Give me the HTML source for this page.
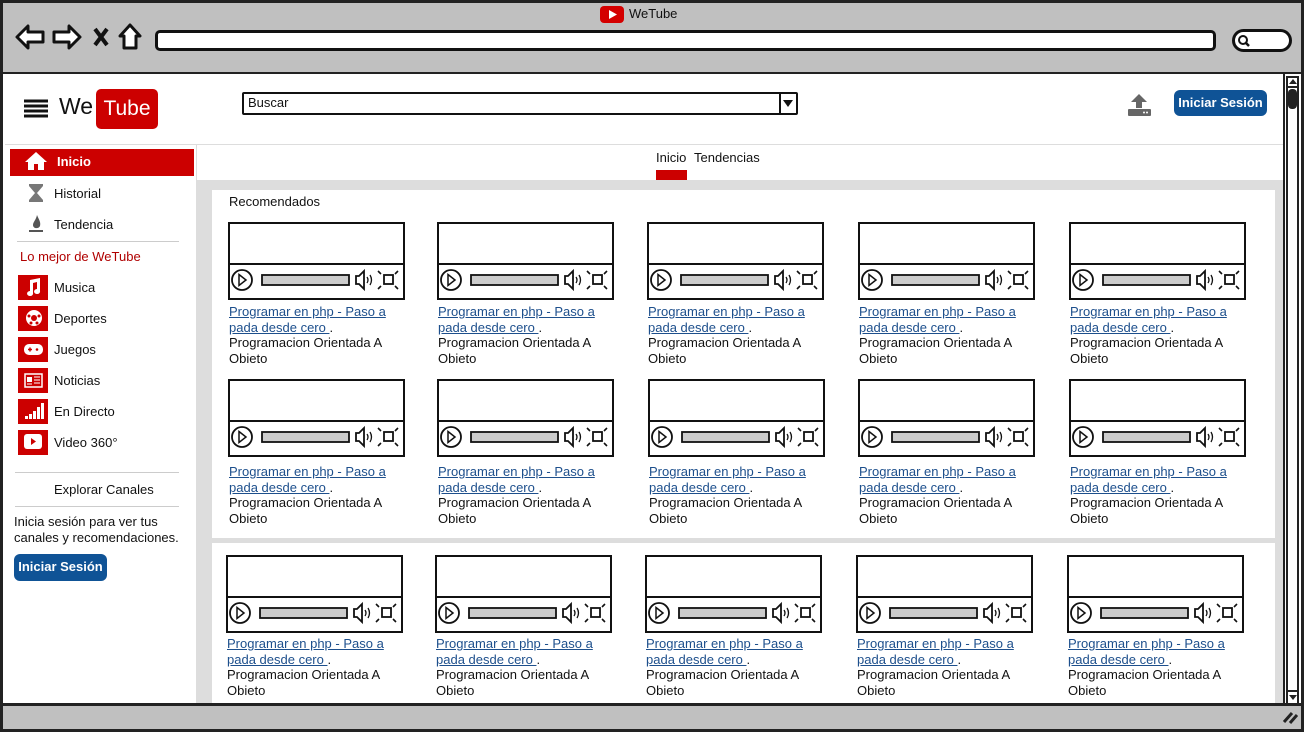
<!DOCTYPE html>
<html><head><meta charset="utf-8">
<style>
*{margin:0;padding:0;box-sizing:border-box}
body{width:1304px;height:732px;overflow:hidden;background:#fff;font-family:"Liberation Sans",sans-serif;color:#111;position:relative}
.a{position:absolute}
.t{font-size:13px;white-space:nowrap}
.card{position:absolute;width:180px}
.card svg{display:block}
.card .tx{position:absolute;left:1px;top:82px;font-size:13px;line-height:15.7px;white-space:nowrap}
.card a{color:#1d4f8c;text-decoration:underline}
.side{position:absolute;left:54px;font-size:13px}
.ic{position:absolute;left:18px;width:30px;height:25px;background:#cc0000}
.btn{position:absolute;background:#0f5396;color:#fff;font-weight:bold;font-size:13px;border-radius:6px;text-align:center}
</style></head><body>
<div class="a" style="left:0;top:0;width:1304px;height:732px;border:3px solid #222;background:#c0c0c0"></div>
<div class="a" style="left:3px;top:72px;width:1298px;height:2px;background:#222"></div>
<div class="a" style="left:3px;top:74px;width:1298px;height:629px;background:#fff"></div>
<svg class="a" style="left:600px;top:6px" width="24" height="17"><rect x="0" y="0" width="24" height="17" rx="4" fill="#d40000"/><path d="M9 4 L17 8.5 L9 13Z" fill="#fff"/></svg>
<div class="a t" style="left:629px;top:6px;font-size:13px">WeTube</div>
<svg class="a" style="left:14px;top:22px" width="135" height="30" fill="#fff" stroke="#111" stroke-width="3" stroke-linejoin="round">
<path d="M3 15 L14 4 V10 H29 V20 H14 V26Z"/>
<path d="M66 15 L55 4 V10 H40 V20 H55 V26Z"/>
<path d="M81 7 L93 23 M93 7 L81 23" stroke-width="4"/>
<path d="M116 3 L126 14 H122 V26 H110 V14 H106Z"/>
</svg>
<div class="a" style="left:155px;top:30px;width:1061px;height:21px;background:#fff;border:3px solid #111;border-radius:5px"></div>
<div class="a" style="left:1232px;top:29px;width:60px;height:23px;background:#fff;border:3px solid #111;border-radius:12px"></div>
<svg class="a" style="left:1237px;top:34px" width="14" height="14"><circle cx="6" cy="6" r="4" fill="none" stroke="#111" stroke-width="2"/><path d="M9 9 L12 12" stroke="#111" stroke-width="2.5"/></svg>
<div class="a" style="left:1283px;top:74px;width:18px;height:629px;background:#fff;border-left:2px solid #222"></div>
<div class="a" style="left:1286px;top:76px;width:13px;height:627px;border:2px solid #222;border-bottom:none"></div>
<div class="a" style="left:1286px;top:86px;width:13px;height:2px;background:#222"></div>
<div class="a" style="left:1286px;top:690px;width:13px;height:2px;background:#222"></div>
<div class="a" style="left:1288px;top:89px;width:9px;height:20px;background:#222;border-radius:4px"></div>
<svg class="a" style="left:1288px;top:78px" width="10" height="8"><path d="M1 6 L5 1 L9 6Z" fill="#222"/></svg>
<svg class="a" style="left:1288px;top:694px" width="10" height="8"><path d="M1 1 L5 6 L9 1Z" fill="#222"/></svg>
<svg class="a" style="left:1282px;top:710px" width="16" height="14"><path d="M2 12 L10 3 M8 13 L15 5" stroke="#222" stroke-width="3"/></svg>
<svg class="a" style="left:24px;top:99px" width="24" height="19"><path d="M0 2H24M0 7H24M0 12H24M0 17H24" stroke="#111" stroke-width="3"/></svg>
<div class="a" style="left:59px;top:93px;font-size:23px">We</div>
<div class="a" style="left:96px;top:89px;width:62px;height:40px;background:#cc0000;border-radius:5px;color:#fff;font-size:21px;text-align:center;line-height:40px">Tube</div>
<div class="a" style="left:242px;top:92px;width:556px;height:23px;border:2px solid #111;border-radius:2px"></div>
<div class="a" style="left:779px;top:93px;width:2px;height:21px;background:#111"></div>
<svg class="a" style="left:782px;top:98px" width="12" height="10"><path d="M1 2 L11 2 L6 9Z" fill="#111"/></svg>
<div class="a t" style="left:248px;top:95px">Buscar</div>
<svg class="a" style="left:1127px;top:94px" width="25" height="23" fill="#666"><path d="M12 0 L20 8 H15 V14 H9 V8 H4Z"/><rect x="1" y="15" width="23" height="7" rx="1"/><circle cx="17" cy="18.5" r="1" fill="#fff"/><circle cx="20" cy="18.5" r="1" fill="#fff"/></svg>
<div class="btn" style="left:1174px;top:90px;width:93px;height:26px;line-height:25px">Iniciar Sesión</div>
<div class="a" style="left:5px;top:144px;width:1278px;height:1px;background:#ddd"></div>
<div class="a" style="left:196px;top:145px;width:1px;height:558px;background:#ddd"></div>
<div class="a" style="left:10px;top:149px;width:184px;height:27px;background:#cc0000"></div>
<svg class="a" style="left:25px;top:151px" width="22" height="20" fill="#fff"><path d="M11 1 L22 11 H19 V19 H13 V13 H9 V19 H3 V11 H0Z"/></svg>
<div class="a t" style="left:57px;top:154px;color:#fff;font-weight:bold">Inicio</div>
<svg class="a" style="left:28px;top:183px" width="16" height="20" fill="#777"><path d="M1 1H15V3L9 10L15 17V19H1V17L7 10L1 3Z"/></svg>
<div class="side" style="top:186px">Historial</div>
<svg class="a" style="left:28px;top:214px" width="16" height="20" fill="#555"><path d="M9 1 C11 6 13 8 12 12 C11 15 5 15 5 11 C5 8 8 6 9 1Z"/><rect x="1" y="16" width="14" height="2"/></svg>
<div class="side" style="top:217px">Tendencia</div>
<div class="a" style="left:17px;top:241px;width:162px;height:1px;background:#ccc"></div>
<div class="a t" style="left:20px;top:249px;color:#b00000">Lo mejor de WeTube</div>
<div class="ic" style="top:275px"></div><div class="side" style="top:280px">Musica</div>
<svg class="a" style="left:25px;top:278px" width="16" height="18" fill="#fff"><path d="M5 2 L15 0 V13 A3 2.5 0 1 1 12 11 V4 L8 5 V15 A3 2.5 0 1 1 5 13Z"/></svg>
<div class="ic" style="top:306px"></div><div class="side" style="top:311px">Deportes</div>
<svg class="a" style="left:25px;top:309px" width="18" height="18"><circle cx="9" cy="9" r="8" fill="#fff"/><circle cx="9" cy="9" r="3" fill="#c00"/><circle cx="4" cy="7" r="1.5" fill="#c00"/><circle cx="14" cy="7" r="1.5" fill="#c00"/><circle cx="6" cy="14" r="1.5" fill="#c00"/><circle cx="12" cy="14" r="1.5" fill="#c00"/></svg>
<div class="ic" style="top:337px"></div><div class="side" style="top:342px">Juegos</div>
<svg class="a" style="left:24px;top:344px" width="19" height="11"><rect x="0" y="0" width="19" height="11" rx="5" fill="#fff"/><path d="M4 5.5H8M6 3.5V7.5" stroke="#c00" stroke-width="1.5"/><circle cx="13" cy="5.5" r="1.3" fill="#c00"/></svg>
<div class="ic" style="top:368px"></div><div class="side" style="top:373px">Noticias</div>
<svg class="a" style="left:24px;top:373px" width="19" height="15"><rect x="1" y="1" width="17" height="13" fill="none" stroke="#fff" stroke-width="1.5"/><rect x="3" y="4" width="5" height="5" fill="#fff"/><path d="M10 4H16M10 7H16M10 10H16M3 11H8" stroke="#fff"/></svg>
<div class="ic" style="top:399px"></div><div class="side" style="top:404px">En Directo</div>
<svg class="a" style="left:24px;top:401px" width="20" height="20" fill="#fff"><rect x="1" y="15" width="3" height="3"/><rect x="5" y="13" width="3" height="5"/><rect x="9" y="10" width="3" height="8"/><rect x="13" y="6" width="3" height="12"/><rect x="17" y="2" width="3" height="16"/></svg>
<div class="ic" style="top:430px"></div><div class="side" style="top:435px">Video 360°</div>
<svg class="a" style="left:24px;top:434px" width="18" height="15"><rect x="0" y="0" width="18" height="15" rx="3" fill="#fff"/><path d="M7 4 L12 7.5 L7 11Z" fill="#c00"/></svg>
<div class="a" style="left:15px;top:472px;width:164px;height:1px;background:#ccc"></div>
<div class="a t" style="left:54px;top:482px">Explorar Canales</div>
<div class="a" style="left:15px;top:506px;width:164px;height:1px;background:#ccc"></div>
<div class="a t" style="left:14px;top:514px;line-height:15.5px">Inicia sesión para ver tus<br>canales y recomendaciones.</div>
<div class="btn" style="left:14px;top:554px;width:93px;height:27px;line-height:26px">Iniciar Sesión</div>
<div class="a t" style="left:656px;top:150px">Inicio</div>
<div class="a t" style="left:694px;top:150px">Tendencias</div>
<div class="a" style="left:656px;top:170px;width:31px;height:10px;background:#cc0000"></div>
<div class="a" style="left:197px;top:180px;width:1086px;height:523px;background:#ddd"></div>
<div class="a" style="left:212px;top:190px;width:1063px;height:348px;background:#fff"></div>
<div class="a" style="left:212px;top:543px;width:1063px;height:160px;background:#fff"></div>
<div class="a t" style="left:229px;top:194px">Recomendados</div>
<svg width="0" height="0" style="position:absolute"><defs><g id="v">
<rect x="1" y="1" width="175" height="76" fill="#fff" stroke="#111" stroke-width="2"/>
<path d="M1 42H176" stroke="#111" stroke-width="2"/>
<circle cx="14" cy="58" r="10" fill="none" stroke="#111" stroke-width="1.8"/>
<path d="M11 52.5 L18 58 L11 63.5Z" fill="none" stroke="#111" stroke-width="1.5"/>
<rect x="34" y="53" width="87" height="10" fill="#ccc" stroke="#111" stroke-width="1.8"/>
<path d="M128 54H131L136 49V67L131 62H128Z" fill="none" stroke="#111" stroke-width="1.8"/>
<path d="M139 55Q141 58 139 61M142 53Q145 58 142 63" fill="none" stroke="#111" stroke-width="1.3"/>
<rect x="156" y="53" width="9" height="9" fill="none" stroke="#111" stroke-width="1.8"/>
<path d="M150 49L153 52M170 49L167 52M150 67L153 64M170 67L167 64" stroke="#111" stroke-width="1.6"/>
</g></defs></svg>
<div class="card" style="left:228px;top:222px"><svg width="178" height="79"><use href="#v"/></svg><div class="tx"><a>Programar en php - Paso a</a><br><a>pada desde cero </a>.<br>Programacion Orientada A<br>Obieto</div></div>
<div class="card" style="left:437px;top:222px"><svg width="178" height="79"><use href="#v"/></svg><div class="tx"><a>Programar en php - Paso a</a><br><a>pada desde cero </a>.<br>Programacion Orientada A<br>Obieto</div></div>
<div class="card" style="left:647px;top:222px"><svg width="178" height="79"><use href="#v"/></svg><div class="tx"><a>Programar en php - Paso a</a><br><a>pada desde cero </a>.<br>Programacion Orientada A<br>Obieto</div></div>
<div class="card" style="left:858px;top:222px"><svg width="178" height="79"><use href="#v"/></svg><div class="tx"><a>Programar en php - Paso a</a><br><a>pada desde cero </a>.<br>Programacion Orientada A<br>Obieto</div></div>
<div class="card" style="left:1069px;top:222px"><svg width="178" height="79"><use href="#v"/></svg><div class="tx"><a>Programar en php - Paso a</a><br><a>pada desde cero </a>.<br>Programacion Orientada A<br>Obieto</div></div>
<div class="card" style="left:228px;top:379px"><svg width="178" height="79"><use href="#v"/></svg><div class="tx" style="top:85px"><a>Programar en php - Paso a</a><br><a>pada desde cero </a>.<br>Programacion Orientada A<br>Obieto</div></div>
<div class="card" style="left:437px;top:379px"><svg width="178" height="79"><use href="#v"/></svg><div class="tx" style="top:85px"><a>Programar en php - Paso a</a><br><a>pada desde cero </a>.<br>Programacion Orientada A<br>Obieto</div></div>
<div class="card" style="left:648px;top:379px"><svg width="178" height="79"><use href="#v"/></svg><div class="tx" style="top:85px"><a>Programar en php - Paso a</a><br><a>pada desde cero </a>.<br>Programacion Orientada A<br>Obieto</div></div>
<div class="card" style="left:858px;top:379px"><svg width="178" height="79"><use href="#v"/></svg><div class="tx" style="top:85px"><a>Programar en php - Paso a</a><br><a>pada desde cero </a>.<br>Programacion Orientada A<br>Obieto</div></div>
<div class="card" style="left:1069px;top:379px"><svg width="178" height="79"><use href="#v"/></svg><div class="tx" style="top:85px"><a>Programar en php - Paso a</a><br><a>pada desde cero </a>.<br>Programacion Orientada A<br>Obieto</div></div>
<div class="card" style="left:226px;top:555px"><svg width="178" height="79"><use href="#v"/></svg><div class="tx" style="top:81px"><a>Programar en php - Paso a</a><br><a>pada desde cero </a>.<br>Programacion Orientada A<br>Obieto</div></div>
<div class="card" style="left:435px;top:555px"><svg width="178" height="79"><use href="#v"/></svg><div class="tx" style="top:81px"><a>Programar en php - Paso a</a><br><a>pada desde cero </a>.<br>Programacion Orientada A<br>Obieto</div></div>
<div class="card" style="left:645px;top:555px"><svg width="178" height="79"><use href="#v"/></svg><div class="tx" style="top:81px"><a>Programar en php - Paso a</a><br><a>pada desde cero </a>.<br>Programacion Orientada A<br>Obieto</div></div>
<div class="card" style="left:856px;top:555px"><svg width="178" height="79"><use href="#v"/></svg><div class="tx" style="top:81px"><a>Programar en php - Paso a</a><br><a>pada desde cero </a>.<br>Programacion Orientada A<br>Obieto</div></div>
<div class="card" style="left:1067px;top:555px"><svg width="178" height="79"><use href="#v"/></svg><div class="tx" style="top:81px"><a>Programar en php - Paso a</a><br><a>pada desde cero </a>.<br>Programacion Orientada A<br>Obieto</div></div>
<div class="a" style="left:3px;top:703px;width:1298px;height:3px;background:#222"></div>
</body></html>
